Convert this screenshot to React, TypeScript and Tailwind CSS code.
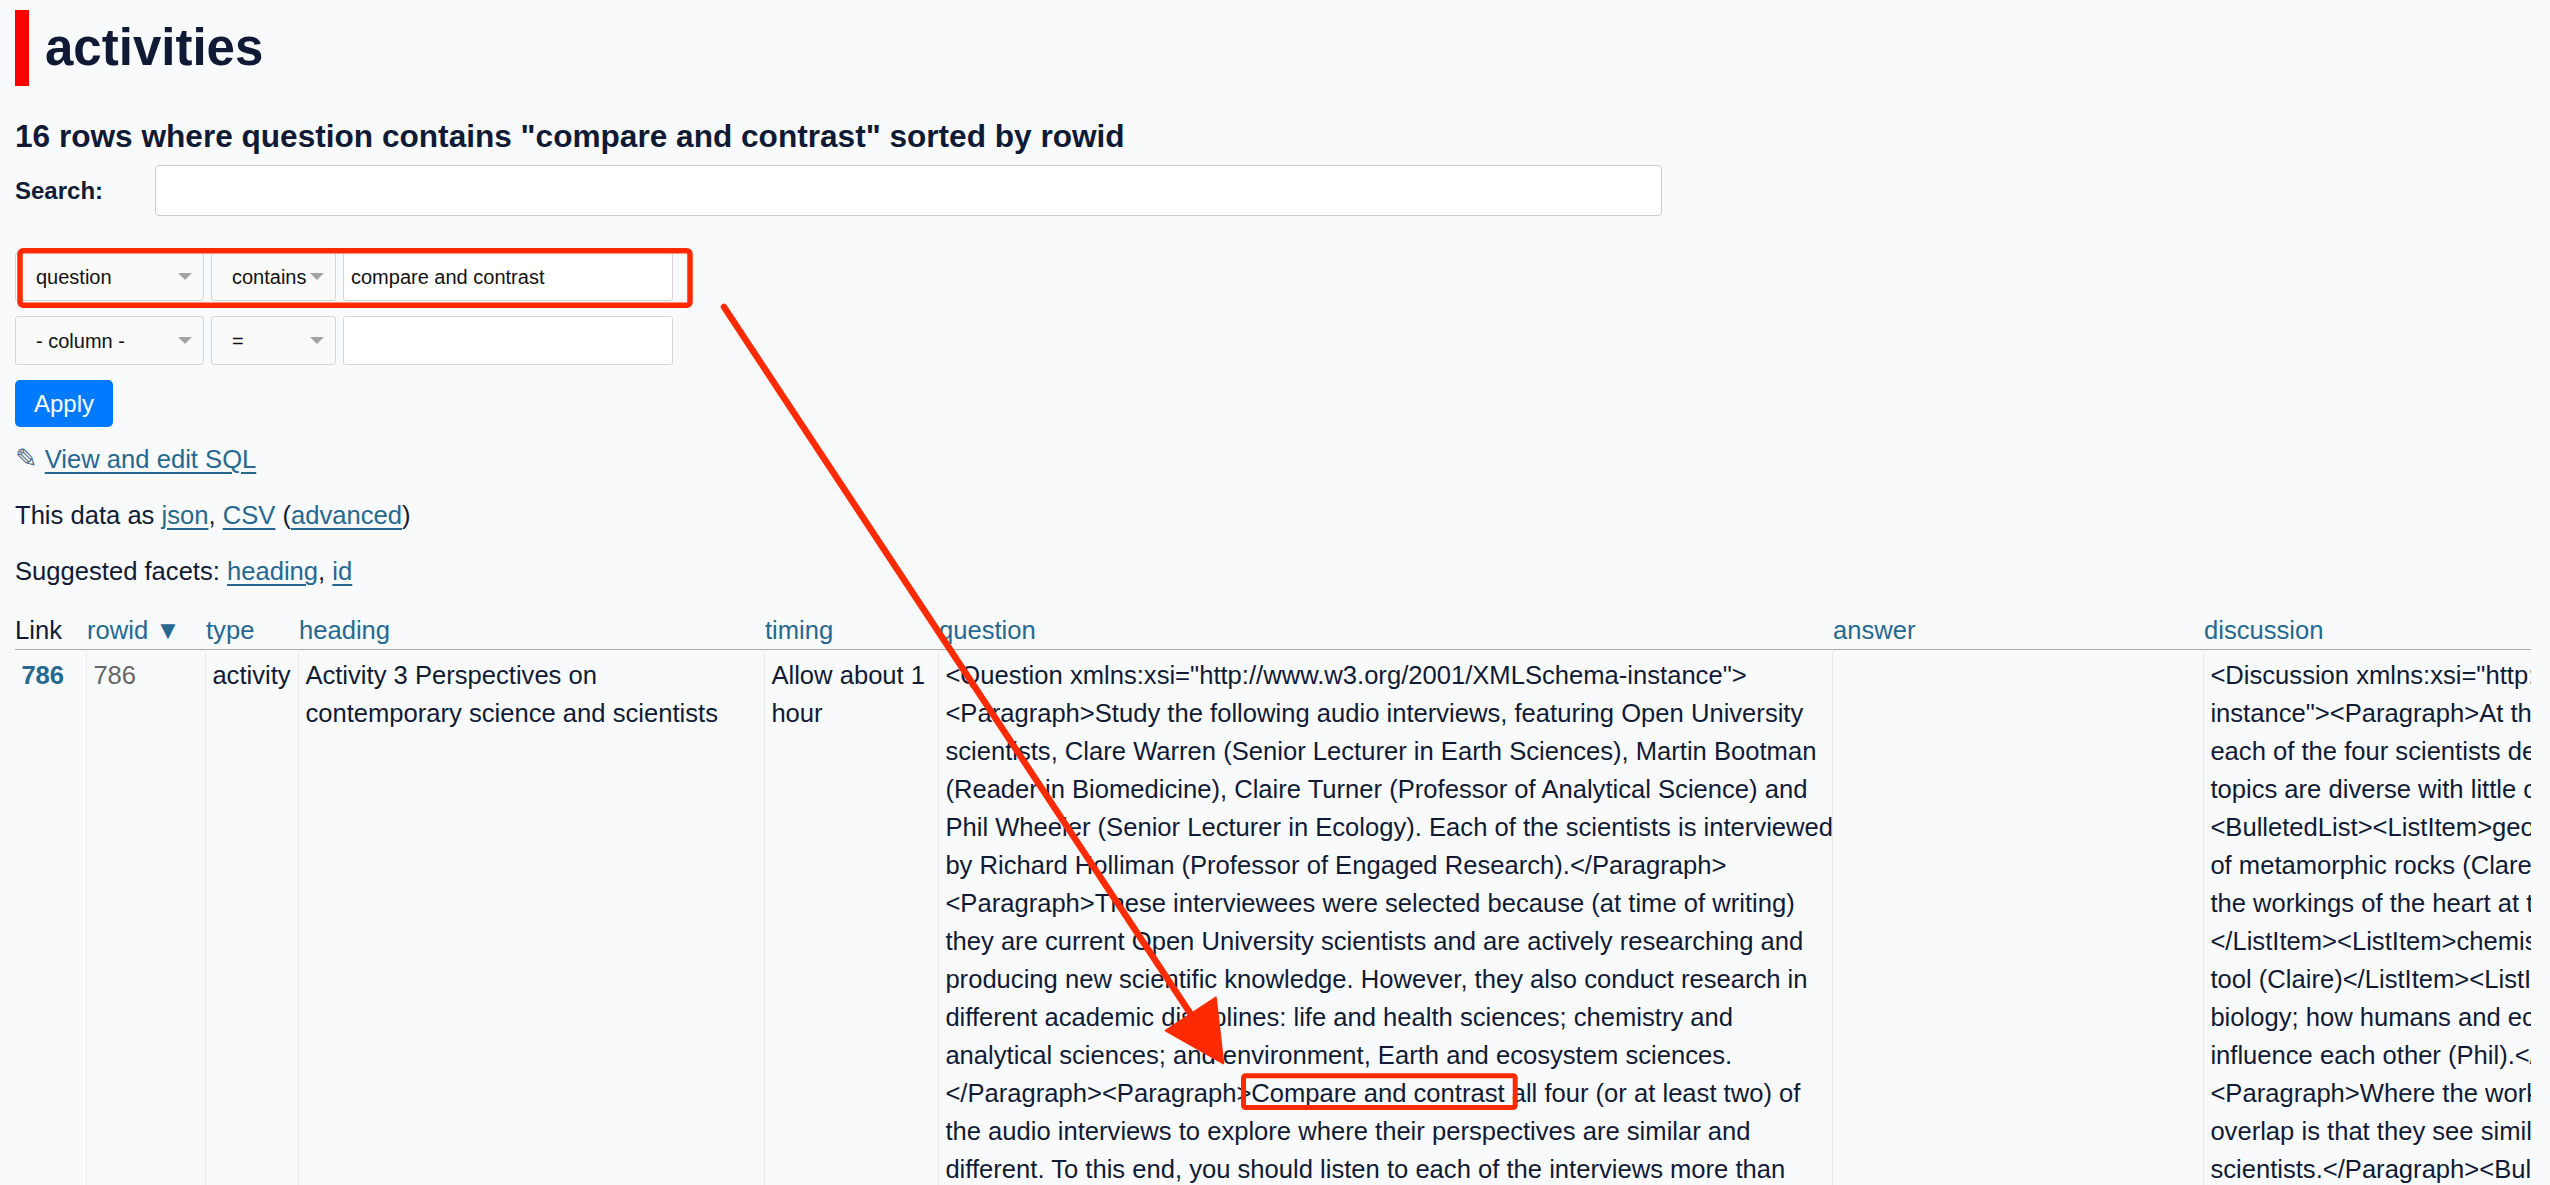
import React from 'react';

const questionLines = [
  '<Question xmlns:xsi="http://www.w3.org/2001/XMLSchema-instance">',
  '<Paragraph>Study the following audio interviews, featuring Open University',
  'scientists, Clare Warren (Senior Lecturer in Earth Sciences), Martin Bootman',
  '(Reader in Biomedicine), Claire Turner (Professor of Analytical Science) and',
  'Phil Wheeler (Senior Lecturer in Ecology). Each of the scientists is interviewed',
  'by Richard Holliman (Professor of Engaged Research).</Paragraph>',
  '<Paragraph>These interviewees were selected because (at time of writing)',
  'they are current Open University scientists and are actively researching and',
  'producing new scientific knowledge. However, they also conduct research in',
  'different academic disciplines: life and health sciences; chemistry and',
  'analytical sciences; and environment, Earth and ecosystem sciences.',
  '</Paragraph><Paragraph>Compare and contrast all four (or at least two) of',
  'the audio interviews to explore where their perspectives are similar and',
  'different. To this end, you should listen to each of the interviews more than',
  'once, making notes as you go.</Paragraph></Question>',
];

const discussionLines = [
  '<Discussion xmlns:xsi="http://www.w3.org/2001/XMLSchema-',
  'instance"><Paragraph>At the time of recording, the research of',
  'each of the four scientists demonstrates that the research',
  'topics are diverse with little overlap:</Paragraph>',
  '<BulletedList><ListItem>geology; the formation and deformation',
  'of metamorphic rocks (Clare)</ListItem><ListItem>biomedicine;',
  'the workings of the heart at the cellular level (Martin)',
  '</ListItem><ListItem>chemistry; developing a diagnostic',
  'tool (Claire)</ListItem><ListItem>ecology; conservation',
  'biology; how humans and ecosystems',
  'influence each other (Phil).</ListItem></BulletedList>',
  '<Paragraph>Where the work of the four scientists does',
  'overlap is that they see similarities in their role as',
  'scientists.</Paragraph><BulletedList><ListItem>',
  'they all work in teams</ListItem>',
];

const columns = [
  { name: 'Link', width: 'w-[72px]', link: false },
  { name: 'rowid', width: 'w-[119px]', link: true, sorted: true },
  { name: 'type', width: 'w-[93px]', link: true },
  { name: 'heading', width: 'w-[466px]', link: true },
  { name: 'timing', width: 'w-[174px]', link: true },
  { name: 'question', width: 'w-[894px]', link: true },
  { name: 'answer', width: 'w-[371px]', link: true },
  { name: 'discussion', width: 'w-[770px]', link: true },
];

const linkClass = 'text-[#276890] underline underline-offset-[4px] decoration-[1.5px]';

function Caret() {
  return (
    <svg width="14" height="7" viewBox="0 0 14 7" className="shrink-0">
      <polygon points="0,0 14,0 7,7" fill="#a3a3a3" />
    </svg>
  );
}

function SelectBox({ value, width }: { value: string; width: string }) {
  return (
    <div
      className={`${width} h-[49px] flex items-center justify-between pl-[20px] pr-[11px] bg-[#fafafa] border border-[#d6d6d6] rounded-[3px] text-[20px] text-[#111]`}
    >
      <span>{value}</span>
      <Caret />
    </div>
  );
}

function FilterRow({ column, op, value }: { column: string; op: string; value: string }) {
  return (
    <div className="flex gap-[7px]">
      <SelectBox value={column} width="w-[189px]" />
      <SelectBox value={op} width="w-[125px]" />
      <div className="w-[330px] h-[49px] flex items-center pl-[7px] bg-white border border-[#d6d6d6] rounded-[3px] text-[20px] text-[#111]">
        {value}
      </div>
    </div>
  );
}

export default function App() {
  const cell = 'align-top p-[6.4px] border-t border-t-[#aaaaaa] border-r border-r-[#ebebeb]';

  return (
    <div className="relative min-h-screen bg-[#f8fafb] text-[#111a35] font-['Liberation_Sans',Arial,sans-serif] pl-[15px] pr-[19px] pt-[10px] pb-[40px] overflow-hidden">
      <h1 className="border-l-[14px] border-l-[#ff0000] pl-[16px] text-[51px] leading-[76px] font-bold">
        activities
      </h1>

      <h3 className="mt-[31px] text-[31.6px] leading-[38px] font-bold">
        16 rows where question contains "compare and contrast" sorted by rowid
      </h3>

      <div className="mt-[10px] flex items-center">
        <label className="w-[140px] text-[24px] font-bold">Search:</label>
        <div className="w-[1507px] h-[51px] bg-white border border-[#cccccc] rounded-[4px]" />
      </div>

      <div className="mt-[36px] flex flex-col gap-[15px]">
        <FilterRow column="question" op="contains" value="compare and contrast" />
        <FilterRow column="- column -" op="=" value="" />
      </div>

      <button className="mt-[15px] w-[98px] h-[47px] rounded-[5px] bg-[#007bff] text-white text-[24px] flex items-center justify-center">
        Apply
      </button>

      <p className="mt-[13px] text-[25.6px] leading-[38.4px]">
        <span className="inline-block leading-none font-['DejaVu_Sans',sans-serif] text-[27px] text-[#4f6a8a]">✎</span>{' '}
        <a className={linkClass}>View and edit SQL</a>
      </p>

      <p className="mt-[17.5px] text-[25.6px] leading-[38.4px]">
        This data as <a className={linkClass}>json</a>, <a className={linkClass}>CSV</a> (
        <a className={linkClass}>advanced</a>)
      </p>

      <p className="mt-[18px] text-[25.6px] leading-[38.4px]">
        Suggested facets: <a className={linkClass}>heading</a>, <a className={linkClass}>id</a>
      </p>

      <div className="mt-[20px] w-[2516px] overflow-hidden">
        <table className="table-fixed border-separate border-spacing-0 w-[2959px] text-[25.6px] leading-[38px]">
          <thead>
            <tr>
              {columns.map((c) => (
                <th key={c.name} className={`${c.width} p-0 text-left font-normal whitespace-nowrap`}>
                  {c.link ? (
                    <a className="text-[#276890]">
                      {c.name}
                      {c.sorted ? ' ▼' : ''}
                    </a>
                  ) : (
                    c.name
                  )}
                </th>
              ))}
            </tr>
          </thead>
          <tbody>
            <tr>
              <td className={cell}>
                <a className="font-bold text-[#276890]">786</a>
              </td>
              <td className={`${cell} text-[#666666]`}>786</td>
              <td className={cell}>activity</td>
              <td className={cell}>Activity 3 Perspectives on contemporary science and scientists</td>
              <td className={cell}>Allow about 1 hour</td>
              <td className={`${cell} whitespace-pre`}>{questionLines.join('\n')}</td>
              <td className={cell}></td>
              <td className={`${cell} whitespace-pre`}>{discussionLines.join('\n')}</td>
            </tr>
          </tbody>
        </table>
      </div>

      {/* annotation layer drawn over the page */}
      <svg className="pointer-events-none absolute left-0 top-0" width="2550" height="1185">
        <rect x="20" y="250.8" width="670" height="54.5" rx="3" fill="none" stroke="#ff2a00" strokeWidth="5.5" />
        <rect x="1243.5" y="1075.8" width="271.7" height="31.7" rx="2" fill="none" stroke="#ff2a00" strokeWidth="5" />
        <line x1="724" y1="307" x2="1194" y2="1019" stroke="#ff2a00" strokeWidth="6.5" strokeLinecap="round" />
        <polygon points="1223.3,1063.3 1215.8,997.6 1165.8,1030.6" fill="#ff2a00" stroke="#ff2a00" strokeWidth="2" strokeLinejoin="round" />
      </svg>
    </div>
  );
}
